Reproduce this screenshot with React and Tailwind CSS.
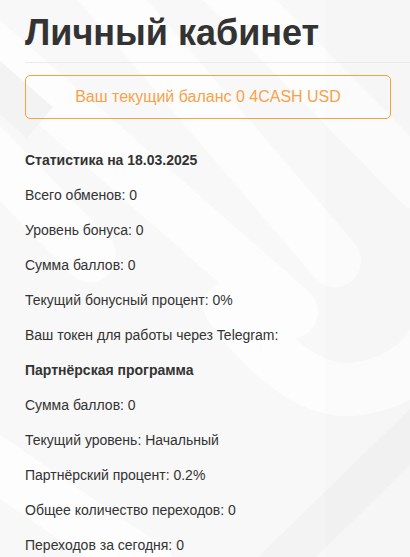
const stats = [
  "Всего обменов: 0",
  "Уровень бонуса: 0",
  "Сумма баллов: 0",
  "Текущий бонусный процент: 0%",
  "Ваш токен для работы через Telegram:",
];

const partner = [
  "Сумма баллов: 0",
  "Текущий уровень: Начальный",
  "Партнёрский процент: 0.2%",
  "Общее количество переходов: 0",
  "Переходов за сегодня: 0",
];

// faint logo watermark behind the page
const Watermark = () => (
  <svg
    className="absolute inset-0 w-full h-full pointer-events-none"
    viewBox="0 0 410 557"
    preserveAspectRatio="none"
  >
    <rect width="410" height="557" fill="#f8f8f8" />
    <g stroke="#fdfdfd" strokeWidth="52" strokeLinecap="round" fill="none">
      <line x1="60" y1="-60" x2="335" y2="255" />
      <line x1="-40" y1="20" x2="292" y2="305" />
      <line x1="160" y1="-80" x2="420" y2="180" />
      <path d="M230 300 Q 300 390 360 380 Q 420 370 440 320" />
      <line x1="-40" y1="120" x2="90" y2="250" />
      <line x1="-40" y1="430" x2="150" y2="557" />
    </g>
    <g stroke="#f3f3f3" strokeWidth="40" fill="none">
      <line x1="470" y1="370" x2="250" y2="580" />
      <line x1="-30" y1="60" x2="40" y2="120" />
    </g>
    <rect x="325" width="85" height="557" fill="#000" opacity="0.008" />
  </svg>
);

export default function App() {
  return (
    <div className="relative min-h-screen overflow-hidden font-['Liberation_Sans',Arial,sans-serif] text-[#333]">
      <Watermark />
      <div className="relative pl-[25px]">
        <div className="mt-[13px] pb-[9px] border-b border-[#ebebeb]">
          <h1 className="text-[36px] leading-[1.1] font-bold">Личный кабинет</h1>
        </div>

        <div className="mt-[12px] mr-[19px] h-[44px] flex items-center justify-center border border-[#f6a33f] rounded-[5px] text-[16px] text-[#f7a24a]">
          Ваш текущий баланс 0 4CASH USD
        </div>

        <div className="mt-[31px] text-[14px] leading-[20px]">
          <p className="mb-[15px] font-bold">Статистика на 18.03.2025</p>
          {stats.map((s) => (
            <p key={s} className="mb-[15px]">{s}</p>
          ))}
          <p className="mb-[15px] font-bold">Партнёрская программа</p>
          {partner.map((s) => (
            <p key={s} className="mb-[15px]">{s}</p>
          ))}
        </div>
      </div>
    </div>
  );
}
